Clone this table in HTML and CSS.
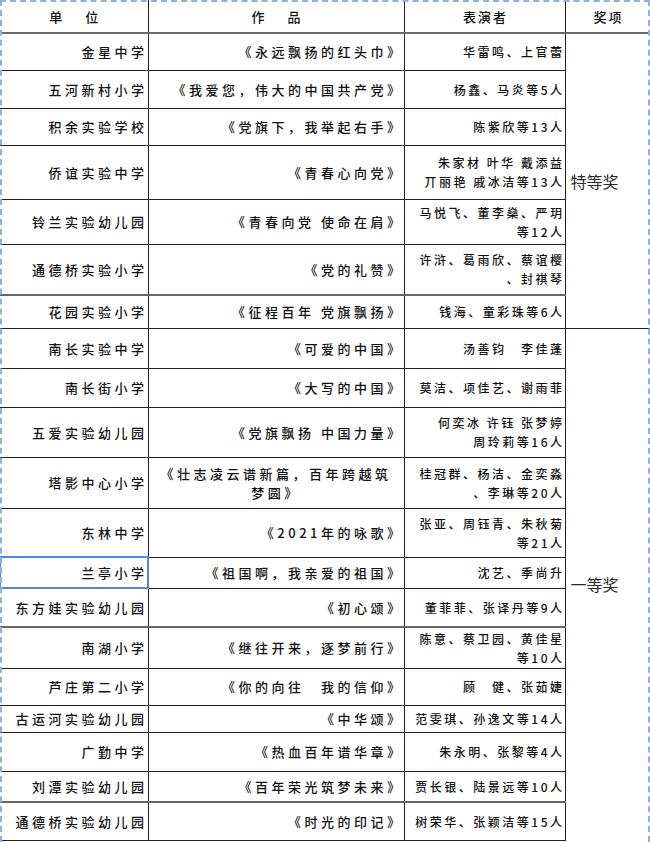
FILE: index.html
```html
<!DOCTYPE html>
<html lang="zh">
<head>
<meta charset="utf-8">
<title>获奖名单</title>
<link rel="stylesheet" href="styles.css">
</head>
<body>
<div class="sheet">
  <table class="awards">
    <colgroup>
      <col class="c-unit"><col class="c-work"><col class="c-perf"><col class="c-prize">
    </colgroup>
    <thead>
      <tr class="h33">
        <th class="h-unit">单　位</th>
        <th class="h-work">作　品</th>
        <th class="h-perf">表演者</th>
        <th class="h-prize">奖项</th>
      </tr>
    </thead>
    <tbody>
      <tr class="h37"><td class="unit">金星中学</td><td class="work">《永远飘扬的红头巾》</td><td class="perf">华雷鸣、上官蕾</td><td class="prize" rowspan="7">特等奖</td></tr>
      <tr class="h38"><td class="unit">五河新村小学</td><td class="work">《我爱您，伟大的中国共产党》</td><td class="perf">杨鑫、马炎等5人</td></tr>
      <tr class="h37"><td class="unit">积余实验学校</td><td class="work">《党旗下，我举起右手》</td><td class="perf">陈紫欣等13人</td></tr>
      <tr class="h54"><td class="unit">侨谊实验中学</td><td class="work">《青春心向党》</td><td class="perf">朱家材 叶华 戴添益<br>丌丽艳 戚冰洁等13人</td></tr>
      <tr class="h45"><td class="unit">铃兰实验幼儿园</td><td class="work">《青春向党 使命在肩》</td><td class="perf">马悦飞、董李燊、严玥<br>等12人</td></tr>
      <tr class="h51"><td class="unit">通德桥实验小学</td><td class="work">《党的礼赞》</td><td class="perf">许浒、葛雨欣、蔡谊樱<br>、封祺琴</td></tr>
      <tr class="h33 thick"><td class="unit">花园实验小学</td><td class="work">《征程百年 党旗飘扬》</td><td class="perf">钱海、童彩珠等6人</td></tr>
      <tr class="h40"><td class="unit">南长实验中学</td><td class="work">《可爱的中国》</td><td class="perf perf-inset">汤善钧　李佳蓬</td><td class="prize prize-open" rowspan="13">一等奖</td></tr>
      <tr class="h39"><td class="unit">南长街小学</td><td class="work">《大写的中国》</td><td class="perf">莫洁、项佳艺、谢雨菲</td></tr>
      <tr class="h50"><td class="unit">五爱实验幼儿园</td><td class="work">《党旗飘扬 中国力量》</td><td class="perf">何奕冰 许钰 张梦婷<br>周玲莉等16人</td></tr>
      <tr class="h51"><td class="unit">塔影中心小学</td><td class="work work-wrap">《壮志凌云谱新篇，百年跨越筑<br>梦圆》</td><td class="perf">桂冠群、杨洁、金奕淼<br>、李琳等20人</td></tr>
      <tr class="h49"><td class="unit">东林中学</td><td class="work">《2021年的咏歌》</td><td class="perf">张亚、周钰青、朱秋菊<br>等21人</td></tr>
      <tr class="h31"><td class="unit selected">兰亭小学</td><td class="work">《祖国啊，我亲爱的祖国》</td><td class="perf">沈艺、季尚升</td></tr>
      <tr class="h39"><td class="unit">东方娃实验幼儿园</td><td class="work">《初心颂》</td><td class="perf">董菲菲、张译丹等9人</td></tr>
      <tr class="h41 thick"><td class="unit">南湖小学</td><td class="work">《继往开来，逐梦前行》</td><td class="perf">陈意、蔡卫园、黄佳星<br>等10人</td></tr>
      <tr class="h37"><td class="unit">芦庄第二小学</td><td class="work">《你的向往　我的信仰》</td><td class="perf">顾　健、张茹婕</td></tr>
      <tr class="h27"><td class="unit">古运河实验幼儿园</td><td class="work">《中华颂》</td><td class="perf">范雯琪、孙逸文等14人</td></tr>
      <tr class="h39"><td class="unit">广勤中学</td><td class="work">《热血百年谱华章》</td><td class="perf">朱永明、张黎等4人</td></tr>
      <tr class="h31"><td class="unit">刘潭实验幼儿园</td><td class="work">《百年荣光筑梦未来》</td><td class="perf">贾长银、陆景远等10人</td></tr>
      <tr class="h38 thick"><td class="unit">通德桥实验幼儿园</td><td class="work">《时光的印记》</td><td class="perf">树荣华、张颖洁等15人</td></tr>
    </tbody>
  </table>
  <div class="marquee"></div>
</div>
</body>
</html>
```

FILE: styles.css
```css
html, body {
  margin: 0;
  padding: 0;
  background: #ffffff;
}

body {
  width: 650px;
  height: 842px;
  overflow: hidden;
  font-family: "Noto Sans CJK SC", "Noto Sans", sans-serif;
  color: #111111;
}

.sheet {
  position: relative;
  width: 650px;
  height: 842px;
  overflow: hidden;
}

.awards {
  border-collapse: collapse;
  table-layout: fixed;
  width: 650px;
}

.c-unit { width: 148px; }
.c-work { width: 256px; }
.c-perf { width: 161px; }
.c-prize { width: 85px; }

.awards th,
.awards td {
  border: 1px solid #222222;
  padding: 0;
  font-weight: 500;
  white-space: nowrap;
  vertical-align: middle;
}

.awards th {
  border-top: none;
  border-bottom: 2px solid #6a6a6a;
  font-size: 13px;
  text-align: center;
}

.awards tr > :first-child { border-left: none; }

.h-unit, .h-work { letter-spacing: 5px; text-indent: 5px; }
.h-perf { letter-spacing: 2px; text-indent: 2px; }
.h-prize { font-size: 11px; letter-spacing: 2px; text-indent: 2px; border-right: none; }

.h27 { height: 27px; }
.h31 { height: 31px; }
.h33 { height: 33px; }
.h37 { height: 37px; }
.h38 { height: 38px; }
.h39 { height: 39px; }
.h40 { height: 40px; }
.h41 { height: 41px; }
.h45 { height: 45px; }
.h49 { height: 49px; }
.h50 { height: 50px; }
.h51 { height: 51px; }
.h54 { height: 54px; }

.thick > td { border-top: 2px solid #666666; }

.unit {
  font-size: 13px;
  letter-spacing: 3.5px;
  text-align: right;
  padding-right: 2px;
}

.work {
  font-size: 13px;
  letter-spacing: 3.5px;
  text-align: right;
  padding-right: 4px;
}

.work-wrap {
  text-align: center;
  line-height: 19px;
  padding-right: 0;
}

.perf {
  font-size: 12px;
  letter-spacing: 2.5px;
  text-align: right;
  line-height: 19px;
  padding-right: 3px;
}

.perf-inset { padding-right: 20px; }

.awards .prize {
  font-size: 16px;
  font-weight: 400;
  color: #2a2a2a;
  text-align: left;
  padding-left: 5px;
  border-right: none;
}

.awards .prize-open { border-bottom: none; }

.awards .selected {
  outline: 2px solid #4f86e2;
  outline-offset: -1px;
}

.marquee {
  position: absolute;
  left: 0;
  top: 0;
  width: 650px;
  height: 842px;
  box-sizing: border-box;
  border: 2px dashed #8cb0ea;
  border-bottom: none;
  pointer-events: none;
}
```
